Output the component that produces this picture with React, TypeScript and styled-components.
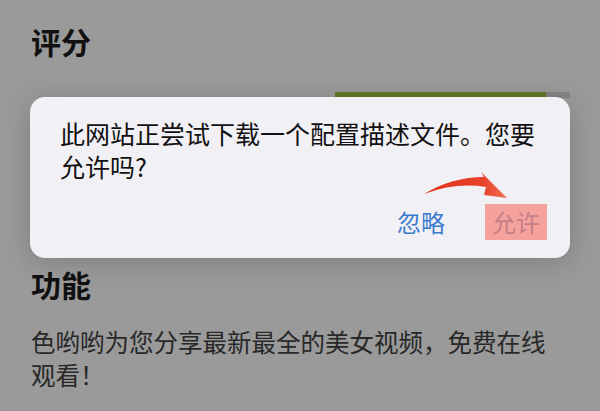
import React from 'react';
import styled, { createGlobalStyle } from 'styled-components';

const GlobalStyle = createGlobalStyle`
  html, body {
    margin: 0;
    padding: 0;
    background: #999999;
  }
  body {
    font-family: 'Noto Sans CJK SC', 'Noto Sans', sans-serif;
  }
`;

const Page = styled.div`
  position: relative;
  width: 600px;
  height: 411px;
  overflow: hidden;
  background: #9a9a9a;
  padding: 1px 40px 0 31px;
  box-sizing: border-box;
`;

const SectionTitle = styled.h2<{ $top: number }>`
  margin: ${(p) => p.$top}px 0 0;
  font-size: 30px;
  line-height: 38px;
  font-weight: 700;
  color: #111;
`;

const RatingBlock = styled.div`
  height: 205px;
  padding-top: 32px;
  box-sizing: border-box;
  display: flex;
  justify-content: flex-end;
  margin-right: -10px;
`;

const Track = styled.div`
  width: 235px;
  height: 6px;
  background: #858585;
`;

const Fill = styled.div`
  height: 100%;
  background: #5f7a2a;
`;

const Description = styled.p`
  margin: 22px 0 0;
  font-size: 24.5px;
  line-height: 33px;
  color: #282828;
`;

const Alert = styled.div`
  position: absolute;
  left: 30px;
  top: 97px;
  width: 540px;
  height: 161px;
  box-sizing: border-box;
  padding: 20px 23px 18px 30px;
  border-radius: 15px;
  background: #f1f0f5;
  box-shadow: 0 4px 28px rgba(0, 0, 0, 0.18);
  display: flex;
  flex-direction: column;
  justify-content: space-between;
`;

const Message = styled.div`
  font-size: 25px;
  line-height: 33px;
  color: #111;
`;

const Actions = styled.div`
  display: flex;
  justify-content: flex-end;
  align-items: center;
  gap: 40px;
`;

const ActionButton = styled.button<{ $highlight?: boolean }>`
  border: none;
  margin: 0;
  padding: 0 ${(p) => (p.$highlight ? '7px' : '0')};
  height: 36px;
  font-family: inherit;
  font-size: 24px;
  line-height: 36px;
  background: ${(p) => (p.$highlight ? '#f5a29c' : 'transparent')};
  color: ${(p) => (p.$highlight ? '#c57f86' : '#3b7bce')};
  cursor: pointer;
`;

const Arrow = styled.svg`
  position: absolute;
  left: 392px;
  top: 73px;
  width: 92px;
  height: 34px;
  overflow: visible;
`;

function App() {
  return (
    <>
      <GlobalStyle />
      <Page>
        <SectionTitle $top={21}>评分</SectionTitle>
        <RatingBlock>
          <Track>
            <Fill style={{ width: `${(211 / 235) * 100}%` }} />
          </Track>
        </RatingBlock>
        <SectionTitle $top={0}>功能</SectionTitle>
        <Description>色哟哟为您分享最新最全的美女视频，免费在线观看！</Description>
        <Alert>
          <Message>此网站正尝试下载一个配置描述文件。您要允许吗?</Message>
          <Actions>
            <ActionButton>忽略</ActionButton>
            <ActionButton $highlight>允许</ActionButton>
          </Actions>
          <Arrow viewBox="0 0 92 34">
            <defs>
              <linearGradient id="arrowGrad" x1="0" y1="0" x2="1" y2="0">
                <stop offset="0" stopColor="#e2321c" />
                <stop offset="0.7" stopColor="#e8402a" />
                <stop offset="1" stopColor="#f07058" />
              </linearGradient>
            </defs>
            <path
              d="M2 24 Q30 7 62 7 L59 2 L85 28 L62 25 L64 17 Q34 12 2 24 Z"
              fill="url(#arrowGrad)"
            />
          </Arrow>
        </Alert>
      </Page>
    </>
  );
}

export default App;
